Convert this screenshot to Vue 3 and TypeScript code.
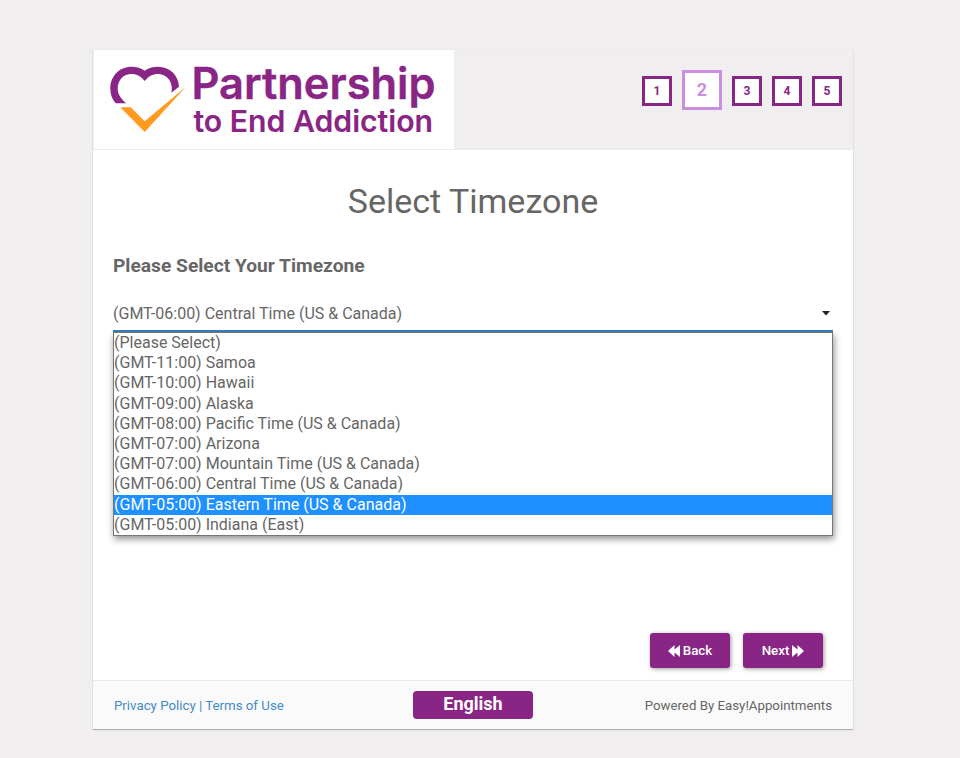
<script setup lang="ts">
import { ref } from 'vue'

const steps = [1, 2, 3, 4, 5]
const activeStep = ref(2)

const zones = [
  '(Please Select)',
  '(GMT-11:00) Samoa',
  '(GMT-10:00) Hawaii',
  '(GMT-09:00) Alaska',
  '(GMT-08:00) Pacific Time (US & Canada)',
  '(GMT-07:00) Arizona',
  '(GMT-07:00) Mountain Time (US & Canada)',
  '(GMT-06:00) Central Time (US & Canada)',
  '(GMT-05:00) Eastern Time (US & Canada)',
  '(GMT-05:00) Indiana (East)',
]
const selected = ref(7)
const hovered = ref(8)
</script>

<template>
  <main class="page">
    <section class="card">
      <header class="header">
        <div class="logo">
          <svg width="360" height="99" viewBox="94 50 360 99" role="img" aria-label="Partnership to End Addiction">
            <path class="mark" d="M115.700 103.300C112 99 110.300 94.500 110.300 88.500C110.300 76 119.500 66.700 131.500 66.700C136.800 66.700 141.200 68 144.700 70.700C148.200 68 152.800 66.700 158 66.700C169.500 66.700 178.500 75 179 86.700L171.300 92.700C171.800 90.500 171.800 89 171.700 87.500C171.300 79.500 165.500 74 158 74C152.500 74 148.300 76.500 144.700 81C141.100 76.500 137 74 131.500 74C123.500 74 117.700 80 117.700 88.500C117.700 94.500 120.800 98.500 126 103.300Z" />
            <path class="check" d="M120.300 107.300H130.700L144.700 121.300L186.200 86.500L144.700 132Z" />
            <text class="name" x="191.500" y="99" textLength="244" lengthAdjust="spacingAndGlyphs">Partnership</text>
            <text class="tagline" x="193.500" y="132" textLength="239.500" lengthAdjust="spacingAndGlyphs">to End Addiction</text>
          </svg>
        </div>
        <nav class="steps">
          <span v-for="step in steps" :key="step" class="step" :class="{ active: step === activeStep }" @click="activeStep = step">{{ step }}</span>
        </nav>
      </header>

      <div class="body">
        <h2 class="title">Select Timezone</h2>
        <label class="label">Please Select Your Timezone</label>
        <div class="select">
          <div class="value">
            <span>{{ zones[selected] }}</span>
            <svg class="caret" width="8" height="4" viewBox="0 0 8 4"><path d="M0 0H8L4.500 4H3.500Z" /></svg>
          </div>
          <ul class="options">
            <li v-for="(zone, i) in zones" :key="zone" :class="{ hovered: i === hovered }" @mouseenter="hovered = i" @click="selected = i">{{ zone }}</li>
          </ul>
        </div>
        <div class="actions">
          <button class="btn" type="button">
            <svg width="12" height="12" viewBox="0 0 12 12"><path d="M6.500 0V4.500L12 0V12L6.500 7.500V12L0 6Z" /></svg>
            <span>Back</span>
          </button>
          <button class="btn" type="button">
            <span>Next</span>
            <svg width="12" height="12" viewBox="0 0 12 12"><path d="M5.500 0V4.500L0 0V12L5.500 7.500V12L12 6Z" /></svg>
          </button>
        </div>
      </div>

      <footer class="footer">
        <span class="links"><a>Privacy Policy</a> | <a>Terms of Use</a></span>
        <span class="language">English</span>
        <span class="powered">Powered By Easy!Appointments</span>
      </footer>
    </section>
  </main>
</template>

<style>
body {
  background: #f0eeef;
}
</style>

<style scoped>
.page {
  box-sizing: border-box;
  min-height: 758px;
  padding: 50px 107px 29px 93px;
  font-family: Roboto, "Liberation Sans", sans-serif;
  color: #666;
}
.card {
  display: flex;
  flex-direction: column;
  width: 760px;
  height: 679px;
  background: #fff;
  box-shadow: 0 1px 1px rgba(0, 0, 0, 0.25), 0 0 1px rgba(0, 0, 0, 0.1);
}
.header {
  box-sizing: border-box;
  display: flex;
  justify-content: space-between;
  height: 100px;
  padding-left: 1px;
  background: #f0eeef;
  border-bottom: 1px solid #eceaeb;
}
.logo {
  width: 360px;
  height: 99px;
  background: #fff;
}
.logo svg {
  display: block;
}
.mark,
.name,
.tagline {
  fill: #882585;
}
.check {
  fill: #ff9a1f;
}
.name,
.tagline {
  font-family: Inter, sans-serif;
  font-weight: 600;
  stroke: #882585;
}
.name {
  font-size: 43.500px;
  stroke-width: 0.400px;
}
.tagline {
  font-size: 30px;
  stroke-width: 0.100px;
}
.steps {
  display: flex;
  align-items: center;
  gap: 10px;
  height: 80px;
  padding-right: 11px;
}
.step {
  box-sizing: border-box;
  width: 30px;
  height: 30px;
  margin-top: 2px;
  border: 3px solid #882585;
  background: #fff;
  color: #882585;
  font-size: 12px;
  font-weight: 700;
  line-height: 24px;
  text-align: center;
}
.step.active {
  width: 40px;
  height: 40px;
  margin-top: 0;
  border-color: #ca8ddf;
  color: #ca8ddf;
  font-size: 18px;
  line-height: 34px;
}
.body {
  flex: 1;
  display: flex;
  flex-direction: column;
  padding: 0 20px;
}
.title {
  margin: 31px 0 0;
  font-size: 34px;
  font-weight: 400;
  line-height: 40px;
  text-align: center;
}
.label {
  margin-top: 33px;
  font-size: 19.200px;
  font-weight: 700;
  line-height: 24px;
}
.select {
  position: relative;
  margin-top: 17px;
}
.value {
  display: flex;
  justify-content: space-between;
  align-items: center;
  height: 35px;
  padding-right: 3px;
  border-bottom: 3px solid #337ab7;
  font-size: 16px;
}
.value span {
  padding-top: 2px;
}
.caret {
  fill: #222;
}
.options {
  position: absolute;
  top: 37px;
  left: 0;
  right: 0;
  margin: 0;
  padding: 0;
  border: 1px solid #767676;
  background: #fff;
  box-shadow: 1px 3px 7px rgba(0, 0, 0, 0.45);
  clip-path: inset(0 -12px -14px -12px);
  list-style: none;
  font-size: 16px;
  line-height: 20.200px;
}
.options .hovered {
  background: #1e90ff;
  color: #fff;
}
.actions {
  display: flex;
  justify-content: flex-end;
  gap: 13px;
  margin-top: auto;
  padding: 0 10px 12px 0;
}
.btn {
  display: flex;
  align-items: center;
  justify-content: center;
  gap: 3px;
  width: 80px;
  height: 35px;
  padding: 0;
  border: 0;
  border-radius: 3px;
  background: #882585;
  box-shadow: 1px 1px 4px rgba(0, 0, 0, 0.4);
  color: #fff;
  font: 500 13.333px Roboto, sans-serif;
}
.btn svg {
  fill: #fff;
}
.footer {
  box-sizing: border-box;
  display: grid;
  grid-template-columns: 1fr 120px 1fr;
  align-items: center;
  height: 49px;
  padding: 0 21px;
  border-top: 1px solid #eaeaea;
  background: #fafafa;
  font-size: 13.280px;
}
.links,
.links a {
  color: #428bca;
}
.language {
  height: 28px;
  border-radius: 4px;
  background: #882585;
  color: #fff;
  font-size: 18px;
  font-weight: 700;
  line-height: 26px;
  text-align: center;
}
.powered {
  text-align: right;
}
</style>
